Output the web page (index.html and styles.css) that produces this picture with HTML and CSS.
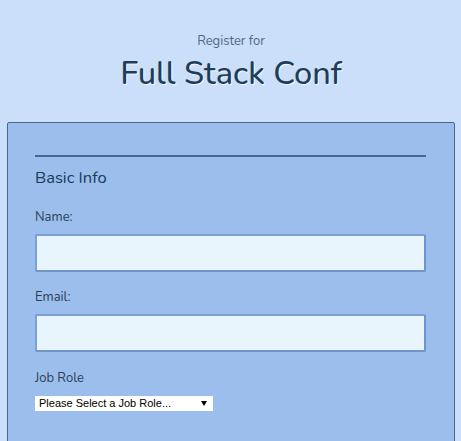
FILE: index.html
```html
<!DOCTYPE html>
<html lang="en">
<head>
<meta charset="utf-8">
<title>Register for Full Stack Conf</title>
<link rel="stylesheet" href="styles.css">
</head>
<body>
<header class="header">
  <span class="header-sub">Register for</span>
  <h1 class="header-title">Full Stack Conf</h1>
</header>
<form class="form">
  <section class="fieldset">
    <h2 class="legend">Basic Info</h2>
    <label class="label label-name" for="name">Name:</label>
    <input class="input" type="text" id="name">
    <label class="label label-mail" for="mail">Email:</label>
    <input class="input" type="email" id="mail">
    <label class="label" for="title">Job Role</label>
    <select class="select" id="title">
      <option>Please Select a Job Role...</option>
    </select>
  </section>
</form>
</body>
</html>
```
FILE: styles.css
```css
html, body {
  margin: 0;
  padding: 0;
}
body {
  background: #cbdffa;
  font-family: "Nunito", Lato, "Open Sans", sans-serif;
  color: #1c3c58;
  padding: 0 6px 0 7px;
}
.header {
  display: flex;
  flex-direction: column;
  align-items: center;
  padding-top: 33px;
  height: 89px;
  box-sizing: border-box;
}
.header-sub {
  font-size: 13px;
  color: #4f6a86;
  line-height: 16px;
}
.header-title {
  margin: 0;
  margin-top: 4px;
  font-size: 32.5px;
  font-weight: 500;
  line-height: 40px;
  color: #1e3e58;
  text-shadow: 1px 1px 1px #f4f9ff;
}
.form {
  margin-top: 33px;
  background: #9bbeed;
  border: 1px solid #456891;
  border-radius: 2px;
  height: 340px;
  padding: 0 28px 0 27px;
}
.fieldset {
  display: flex;
  flex-direction: column;
  align-items: flex-start;
  border-top: 2px solid #456891;
  margin-top: 32px;
}
.legend {
  margin: 11px 0 0;
  font-size: 16.5px;
  font-weight: 400;
  color: #1a3a56;
  line-height: 20px;
}
.label {
  font-size: 13px;
  color: #2c3f52;
  line-height: 16px;
  margin-top: 18px;
}
.label-name {
  margin-top: 21px;
}
.label-mail {
  margin-top: 17px;
}
.input {
  box-sizing: border-box;
  width: 100%;
  height: 38px;
  margin: 9px 0 0;
  background: #e8f5fc;
  border: 2px solid #7aa0d6;
  border-radius: 2px;
  border-right-color: #6f95cc;
  border-bottom-color: #6f95cc;
}
.select {
  -webkit-appearance: none;
  appearance: none;
  margin-top: 10px;
  width: 178px;
  height: 15px;
  font-family: "Liberation Sans", Arial, sans-serif;
  font-size: 11px;
  line-height: 15px;
  color: #000;
  background: #fff url("data:image/svg+xml,%3Csvg xmlns='http://www.w3.org/2000/svg' width='6' height='5'%3E%3Cpath d='M0 0h6L3 5z' fill='%23000'/%3E%3C/svg%3E") no-repeat right 6px center;
  border: 0;
  border-radius: 0;
  padding: 0 0 0 4px;
}
```
